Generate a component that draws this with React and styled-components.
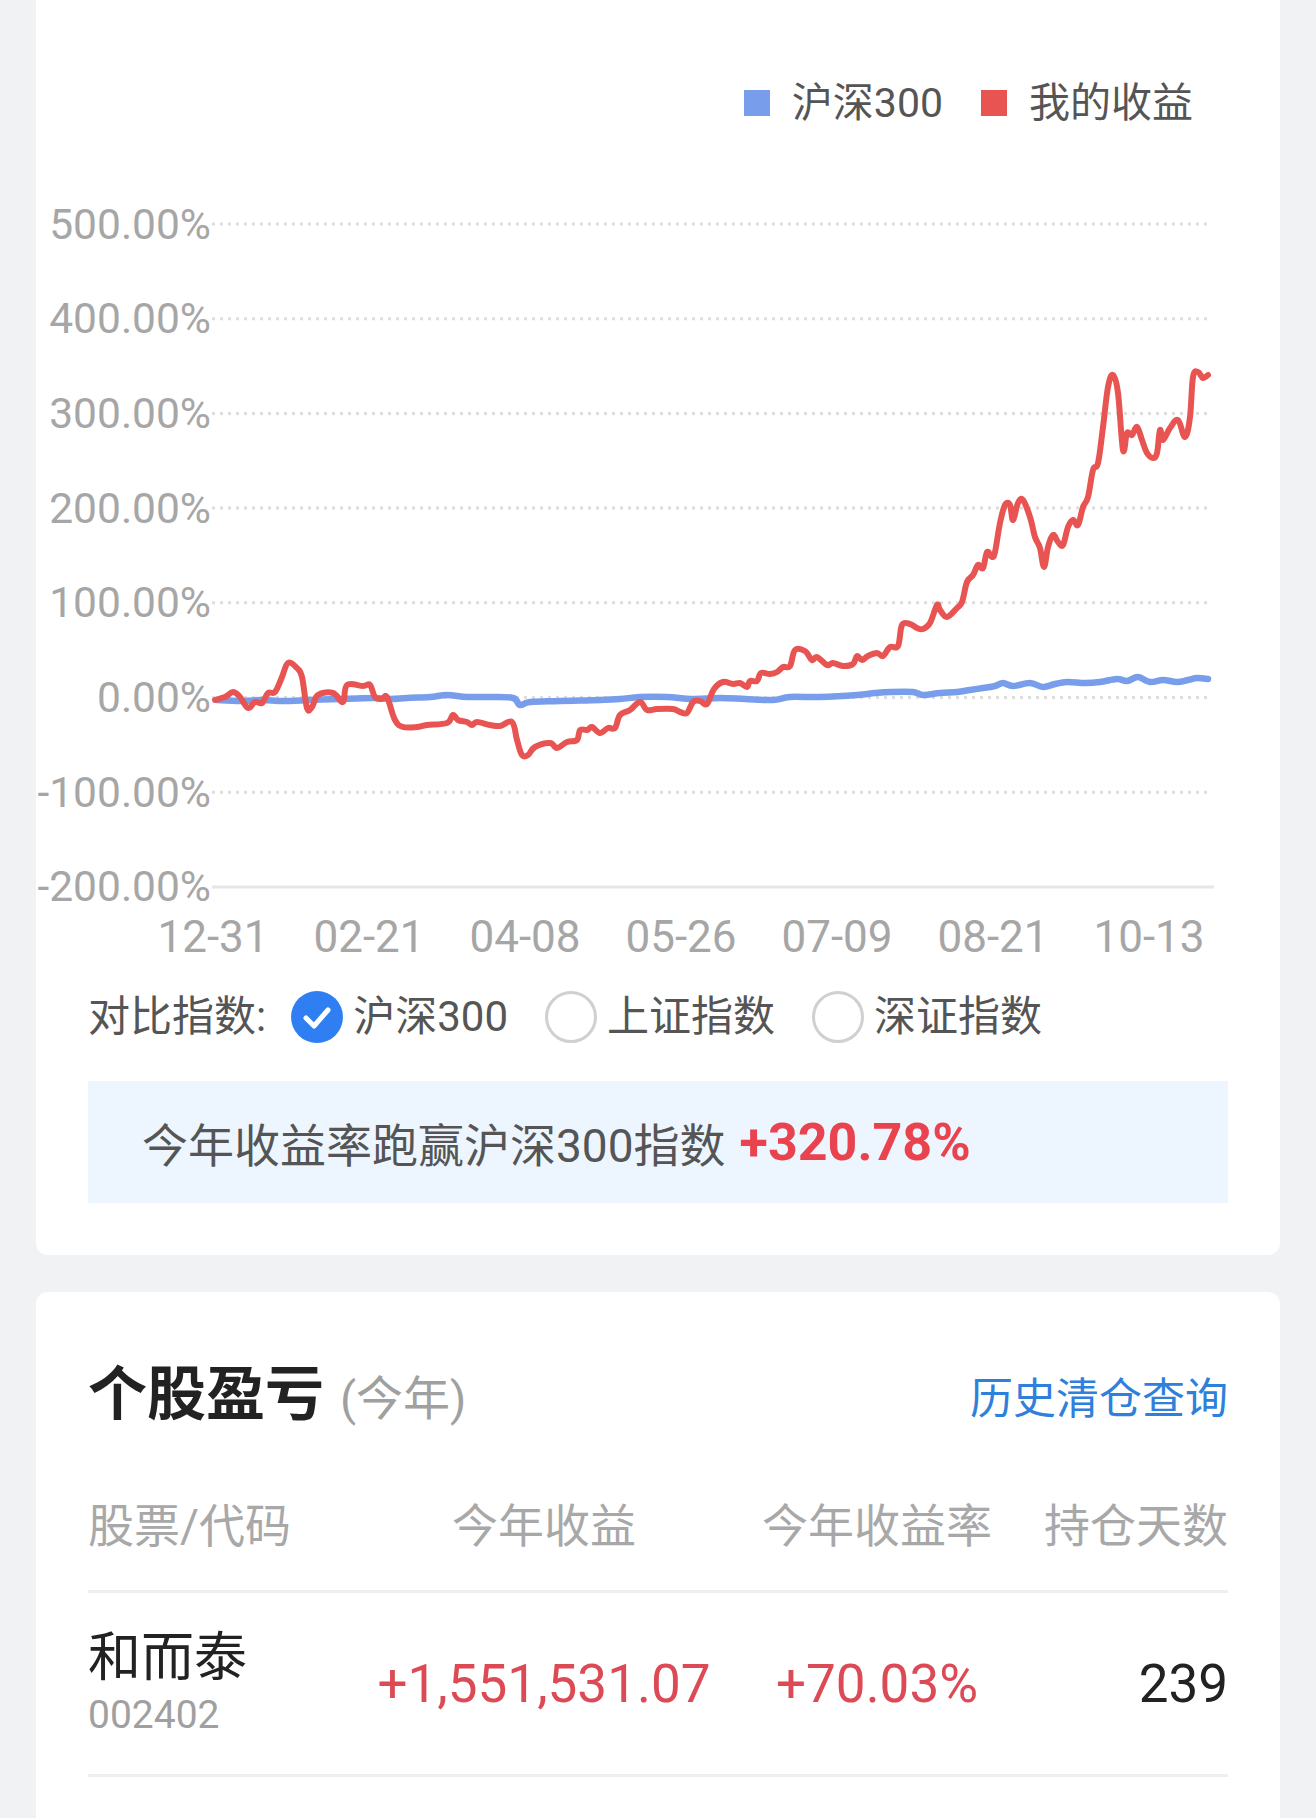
import React from "react";
import styled, { createGlobalStyle } from "styled-components";

const GlobalStyle = createGlobalStyle`
  html, body { margin: 0; padding: 0; background: #f1f2f4; }
  body { font-family: Roboto, "Noto Sans CJK SC", "Noto Sans", sans-serif; }
`;

const Page = styled.div`
  height: 1818px;
  overflow: hidden;
  padding: 0 36px;
  box-sizing: border-box;
`;

const Card = styled.section`
  background: #ffffff;
  border-radius: ${(p) => (p.$cutTop ? "0 0 12px 12px" : "12px")};
  padding: ${(p) => p.$pad};
  margin-top: ${(p) => p.$mt || "0"};
`;

const LegendRow = styled.div`
  display: flex;
  justify-content: flex-end;
  align-items: center;
  height: 50px;
  padding: 0 87px 0 52px;
  gap: 38px;
`;

const LegendItem = styled.div`
  display: flex;
  align-items: center;
  gap: 22px;
  font-size: 41px;
  line-height: 50px;
  color: #555555;
`;

const Swatch = styled.span`
  width: 26px;
  height: 26px;
  background: ${(p) => p.$color};
  display: inline-block;
`;

const ChartSvg = styled.svg`
  display: block;
  margin-top: 32px;
  width: 1244px;
  height: 800px;
  overflow: visible;
  font-family: Roboto, "Noto Sans", sans-serif;
`;

const RadioRow = styled.div`
  display: flex;
  align-items: center;
  height: 52px;
  margin-top: 31px;
  padding: 0 52px;
  font-size: 42px;
  color: #555555;
`;

const RadioLabel = styled.span`
  line-height: 52px;
  margin-right: 25px;
`;

const Option = styled.label`
  display: flex;
  align-items: center;
  gap: 10px;
  margin-right: 37px;
  line-height: 52px;
`;

const EmptyCircle = styled.span`
  width: 52px;
  height: 52px;
  box-sizing: border-box;
  border-radius: 50%;
  border: 3px solid #d0d0d0;
  display: inline-block;
`;

const Highlight = styled.div`
  margin: 38px 52px 0;
  height: 122px;
  background: #edf5fe;
  display: flex;
  align-items: center;
  padding-left: 54px;
  font-size: 46px;
  color: #555555;
`;

const HighlightValue = styled.span`
  font-weight: 700;
  font-size: 52px;
  color: #e8434f;
  margin-left: 14px;
`;

const TitleRow = styled.div`
  display: flex;
  justify-content: space-between;
  align-items: center;
  height: 80px;
`;

const TitleGroup = styled.div`
  display: flex;
  align-items: baseline;
  gap: 16px;
`;

const Title = styled.h2`
  margin: 0;
  font-size: 59px;
  line-height: 80px;
  font-weight: 700;
  color: #222222;
`;

const SubTitle = styled.span`
  font-size: 47px;
  color: #a0a0a0;
`;

const Link = styled.a`
  font-size: 43px;
  color: #2f80db;
  text-decoration: none;
`;

const Grid = styled.div`
  display: grid;
  grid-template-columns: 250px 412px 254px 224px;
  align-items: center;
  border-bottom: 3px solid #efefef;
  box-sizing: content-box;
`;

const HeaderRow = styled(Grid)`
  padding: 67px 0 39px;
  font-size: 46px;
  line-height: 49px;
  color: #a8a8a8;
`;

const DataRow = styled(Grid)`
  height: 181px;
`;

const Cell = styled.div`
  text-align: ${(p) => p.$align || "left"};
  font-size: ${(p) => p.$size || "inherit"};
  color: ${(p) => p.$color || "inherit"};
  white-space: nowrap;
`;

const NameBlock = styled.div`
  display: flex;
  flex-direction: column;
  gap: 5px;
`;

const StockName = styled.span`
  font-size: 53px;
  line-height: 58px;
  color: #222222;
`;

const StockCode = styled.span`
  font-size: 39px;
  line-height: 46px;
  color: #a0a0a0;
`;

const RED = "#e85452";
const BLUE = "#789dea";

const redPts = [
  [215,700],[225,697],[233,692],[240,697],[248,708],[255,702],[262,703],[268,693],[275,692],[282,677],[288,663],[297,668],[302,677],[307,708],[312,707],[318,695],[333,693],[343,702],[347,685],[363,686],[370,685],[375,697],[382,699],[387,697],[395,720],[403,727],[417,727],[427,725],[447,723],[453,715],[458,720],[467,722],[472,725],[477,722],[490,725],[500,726],[512,722],[517,740],[522,755],[528,755],[535,747],[550,743],[557,748],[567,742],[577,740],[580,730],[587,730],[592,727],[600,733],[608,728],[615,728],[620,715],[630,710],[640,702],[647,710],[657,709],[673,709],[680,712],[687,713],
  [693,702],[700,701],[707,704],[714,689],[723,682],[733,684],[740,683],[747,687],[750,681],[757,681],[761,673],[770,674],[777,672],[783,667],[790,666],[795,650],[805,651],[812,660],[817,657],[827,665],[833,663],[843,666],[853,664],[857,656],[862,660],[868,656],[877,653],[883,656],[890,647],[898,646],[902,625],[910,624],[917,628],[923,629],[930,623],[937,605],[940,610],[947,617],[957,608],[962,602],[967,582],[973,575],[978,565],[983,568],[987,552],[992,557],[995,552],[1000,523],[1005,505],[1010,505],[1013,520],[1018,503],[1023,500],[1030,517],[1035,537],[1040,548],[1044,567],[1048,547],[1053,535],[1058,542],[1063,545],[1068,527],[1073,520],[1078,525],[1083,507],[1088,497],[1093,470],[1098,463],[1103,427],[1108,387],[1113,375],[1118,393],[1123,450],[1127,433],[1132,435],[1137,427],[1142,440],[1147,453],[1153,458],[1157,453],[1160,430],[1163,440],[1170,428],[1178,420],[1185,437],[1190,417],[1193,377],[1198,372],[1203,378],[1208,375]
];

const bluePts = [
  [217,700],[240,701],[262,700],[283,701],[310,700],[340,699],[373,698],[390,699],[407,698],[430,697],[447,695],[467,697],[490,697],[513,698],[520,705],[530,702],[560,701],[600,700],[620,699],[640,697],[667,697],[693,699],[720,698],[745,699],[773,700],[790,697],[820,697],[857,695],[875,693],[890,692],[913,692],[923,695],[940,693],[957,692],[970,690],[983,688],[995,686],[1003,683],[1013,686],[1030,683],[1043,687],[1055,684],[1067,682],[1085,683],[1100,682],[1117,679],[1127,681],[1138,677],[1150,682],[1163,680],[1177,682],[1188,680],[1197,678],[1208,679]
];

const OX = 36;
const OY = 160;

function smoothPath(pts) {
  const p = pts.map(([x, y]) => [x - OX, y - OY]);
  let d = `M${p[0][0]} ${p[0][1]}`;
  for (let i = 0; i < p.length - 1; i++) {
    const p0 = p[i - 1] || p[i];
    const p1 = p[i];
    const p2 = p[i + 1];
    const p3 = p[i + 2] || p2;
    const t = 0.18;
    const c1x = p1[0] + (p2[0] - p0[0]) * t;
    const c1y = p1[1] + (p2[1] - p0[1]) * t;
    const c2x = p2[0] - (p3[0] - p1[0]) * t;
    const c2y = p2[1] - (p3[1] - p1[1]) * t;
    d += ` C${c1x.toFixed(1)} ${c1y.toFixed(1)} ${c2x.toFixed(1)} ${c2y.toFixed(1)} ${p2[0]} ${p2[1]}`;
  }
  return d;
}

const yLabels = ["500.00%", "400.00%", "300.00%", "200.00%", "100.00%", "0.00%", "-100.00%", "-200.00%"];
const xLabels = ["12-31", "02-21", "04-08", "05-26", "07-09", "08-21", "10-13"];

function Chart() {
  return (
    <ChartSvg viewBox="0 0 1244 800">
      {yLabels.map((label, i) => {
        const y = 224 + 94.7 * i - OY;
        const last = i === yLabels.length - 1;
        return (
          <g key={label}>
            <line
              x1={176}
              x2={last ? 1178 : 1174}
              y1={y}
              y2={y}
              stroke={last ? "#e6e6e6" : "#dedede"}
              strokeWidth={3}
              strokeDasharray={last ? undefined : "3 5"}
            />
            <text x={175} y={y} textAnchor="end" dominantBaseline="central" fontSize="42.5" fill="#a6a6a6">
              {label}
            </text>
          </g>
        );
      })}
      {xLabels.map((label, i) => (
        <text key={label} x={177 + 156 * i} y={777} textAnchor="middle" dominantBaseline="central" fontSize="44" fill="#a6a6a6">
          {label}
        </text>
      ))}
      <path d={smoothPath(bluePts)} fill="none" stroke={BLUE} strokeWidth={6.5} strokeLinejoin="round" strokeLinecap="round" />
      <path d={smoothPath(redPts)} fill="none" stroke={RED} strokeWidth={6} strokeLinejoin="round" strokeLinecap="round" />
    </ChartSvg>
  );
}

function CheckedCircle() {
  return (
    <svg width="52" height="52" viewBox="0 0 52 52">
      <circle cx="26" cy="26" r="26" fill="#2f7ff3" />
      <path d="M15 27 L23 35 L37 19" fill="none" stroke="#ffffff" strokeWidth="5" strokeLinecap="round" strokeLinejoin="round" />
    </svg>
  );
}

export default function App() {
  return (
    <>
      <GlobalStyle />
      <Page>
        <Card $cutTop $pad="78px 0 52px">
          <LegendRow>
            <LegendItem>
              <Swatch $color={BLUE} />
              沪深300
            </LegendItem>
            <LegendItem>
              <Swatch $color={RED} />
              我的收益
            </LegendItem>
          </LegendRow>
          <Chart />
          <RadioRow>
            <RadioLabel>对比指数:</RadioLabel>
            <Option>
              <CheckedCircle />
              沪深300
            </Option>
            <Option>
              <EmptyCircle />
              上证指数
            </Option>
            <Option>
              <EmptyCircle />
              深证指数
            </Option>
          </RadioRow>
          <Highlight>
            今年收益率跑赢沪深300指数
            <HighlightValue>+320.78%</HighlightValue>
          </Highlight>
        </Card>

        <Card $mt="37px" $pad="63px 52px 80px">
          <TitleRow>
            <TitleGroup>
              <Title>个股盈亏</Title>
              <SubTitle>(今年)</SubTitle>
            </TitleGroup>
            <Link href="#">历史清仓查询</Link>
          </TitleRow>
          <HeaderRow>
            <Cell>股票/代码</Cell>
            <Cell $align="center">今年收益</Cell>
            <Cell $align="center">今年收益率</Cell>
            <Cell $align="right">持仓天数</Cell>
          </HeaderRow>
          <DataRow>
            <NameBlock>
              <StockName>和而泰</StockName>
              <StockCode>002402</StockCode>
            </NameBlock>
            <Cell $align="center" $size="53px" $color="#dc4a55">+1,551,531.07</Cell>
            <Cell $align="center" $size="53px" $color="#dc4a55">+70.03%</Cell>
            <Cell $align="right" $size="53px" $color="#222222">239</Cell>
          </DataRow>
        </Card>
      </Page>
    </>
  );
}
